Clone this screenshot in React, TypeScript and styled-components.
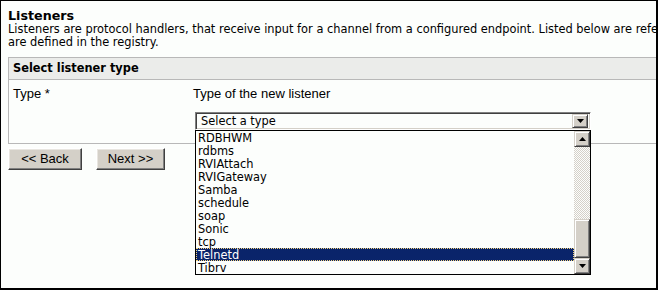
import React from "react";
import styled, { createGlobalStyle, css } from "styled-components";

const GlobalStyle = createGlobalStyle`
  html, body { margin: 0; padding: 0; background: #fcfefc; }
`;

const Frame = styled.div`
  width: 658px;
  height: 290px;
  box-sizing: border-box;
  border: 1px solid #000;
  border-right-width: 2px;
  border-bottom-width: 2px;
  background: #fcfefc;
  overflow: hidden;
  font-family: "DejaVu Sans", Verdana, sans-serif;
  color: #000;
`;

const Content = styled.div`
  width: 900px;
  padding: 7px 0 0 7px;
`;

const Title = styled.h1`
  margin: 0;
  font-size: 12.7px;
  line-height: 15px;
  font-weight: bold;
`;

const Description = styled.p`
  margin: 0;
  font-size: 11.4px;
  line-height: 13px;
  white-space: nowrap;
`;

const Panel = styled.section`
  margin-top: 8px;
  width: 880px;
  border: 1px solid #b8b8b8;
  border-right: none;
`;

const PanelHeader = styled.div`
  height: 21px;
  background: #ebecea;
  border-bottom: 1px solid #b8b8b8;
  padding-left: 4px;
  font-size: 11.4px;
  font-weight: bold;
  line-height: 21px;
`;

const FormRow = styled.div`
  display: grid;
  grid-template-columns: 180px 1fr;
  padding: 6px 0 13px 4px;
  font-family: "Liberation Sans", Arial, sans-serif;
  font-size: 13px;
  line-height: 15px;
`;

const FieldCol = styled.div`
  display: flex;
  flex-direction: column;
  align-items: flex-start;
`;

const SelectWrap = styled.div`
  position: relative;
  margin-top: 11px;
  margin-left: 2px;
`;

const SelectBox = styled.div`
  width: 396px;
  height: 18px;
  box-sizing: border-box;
  border: 1px solid;
  border-color: #808080 #fff #fff #808080;
  box-shadow: inset 1px 1px #404040, inset -1px -1px #d4d0c8;
  background: #fcfefc;
  display: flex;
  align-items: center;
  justify-content: space-between;
  padding: 2px 2px 2px 5px;
  font-family: "DejaVu Sans", Verdana, sans-serif;
  font-size: 11.4px;
  line-height: 14px;
`;

const ScrollBtn = styled.div<{ $h?: number }>`
  width: 16px;
  height: ${(p) => p.$h ?? 14}px;
  box-sizing: border-box;
  flex: none;
  background: #d4d0c8;
  border: 1px solid;
  border-color: #d4d0c8 #404040 #404040 #d4d0c8;
  box-shadow: inset 1px 1px #fff, inset -1px -1px #808080;
  display: flex;
  align-items: center;
  justify-content: center;
`;

const DropList = styled.div`
  position: absolute;
  top: 18px;
  left: 0;
  width: 396px;
  height: 145px;
  box-sizing: border-box;
  border: 1px solid #000;
  background: #fcfefc;
  display: flex;
  z-index: 2;
`;

const Options = styled.ul`
  flex: 1;
  margin: 0;
  padding: 0;
  list-style: none;
  font-family: "DejaVu Sans", Verdana, sans-serif;
  font-size: 11.4px;
`;

const Option = styled.li<{ $selected?: boolean }>`
  height: 13px;
  box-sizing: border-box;
  padding: 1px 0 0 2px;
  line-height: 12px;
  white-space: nowrap;
  ${(p) =>
    p.$selected &&
    css`
      background: #0a246a;
      color: #fff;
      outline: 1px dotted #f2d27c;
      outline-offset: -1px;
    `}
`;

const ScrollBar = styled.div`
  width: 16px;
  display: flex;
  flex-direction: column;
`;

const Track = styled.div<{ $h: number }>`
  height: ${(p) => p.$h}px;
  flex: none;
  background: repeating-conic-gradient(#d4d0c8 0 25%, #fcfefc 0 50%) 0 0 / 2px 2px;
`;

const ButtonRow = styled.div`
  display: flex;
  gap: 14px;
  margin-top: 4px;
`;

const Button = styled.button<{ $w: number }>`
  width: ${(p) => p.$w}px;
  height: 22px;
  box-sizing: border-box;
  background: #d4d0c8;
  border: 1px solid;
  border-color: #fff #404040 #404040 #fff;
  box-shadow: inset -1px -1px #808080, inset 1px 1px #e8e6e0;
  font-family: "Liberation Sans", Arial, sans-serif;
  font-size: 13px;
  color: #000;
  padding: 0;
  line-height: 18px;
`;

const Tri = ({ up }: { up?: boolean }) => (
  <svg width="7" height="4" viewBox="0 0 7 4" style={{ display: "block" }}>
    <polygon points={up ? "3.5,0 7,4 0,4" : "0,0 7,0 3.5,4"} fill="#000" />
  </svg>
);

const items = [
  "RDBHWM",
  "rdbms",
  "RVIAttach",
  "RVIGateway",
  "Samba",
  "schedule",
  "soap",
  "Sonic",
  "tcp",
  "Telnetd",
  "Tibrv",
];

export default function App() {
  return (
    <>
      <GlobalStyle />
      <Frame>
        <Content>
          <Title>Listeners</Title>
          <Description>
            Listeners are protocol handlers, that receive input for a channel from a configured endpoint. Listed below are references to the listeners that
            <br />
            are defined in the registry.
          </Description>
          <Panel>
            <PanelHeader>Select listener type</PanelHeader>
            <FormRow>
              <div>Type *</div>
              <FieldCol>
                <div>Type of the new listener</div>
                <SelectWrap>
                  <SelectBox>
                    <span>Select a type</span>
                    <ScrollBtn>
                      <Tri />
                    </ScrollBtn>
                  </SelectBox>
                  <DropList>
                    <Options>
                      {items.map((it) => (
                        <Option key={it} $selected={it === "Telnetd"}>
                          {it}
                        </Option>
                      ))}
                    </Options>
                    <ScrollBar>
                      <ScrollBtn $h={16}>
                        <Tri up />
                      </ScrollBtn>
                      <Track $h={72} />
                      <ScrollBtn $h={39} />
                      <ScrollBtn $h={16}>
                        <Tri />
                      </ScrollBtn>
                    </ScrollBar>
                  </DropList>
                </SelectWrap>
              </FieldCol>
            </FormRow>
          </Panel>
          <ButtonRow>
            <Button $w={74}>&lt;&lt; Back</Button>
            <Button $w={69}>Next &gt;&gt;</Button>
          </ButtonRow>
        </Content>
      </Frame>
    </>
  );
}
